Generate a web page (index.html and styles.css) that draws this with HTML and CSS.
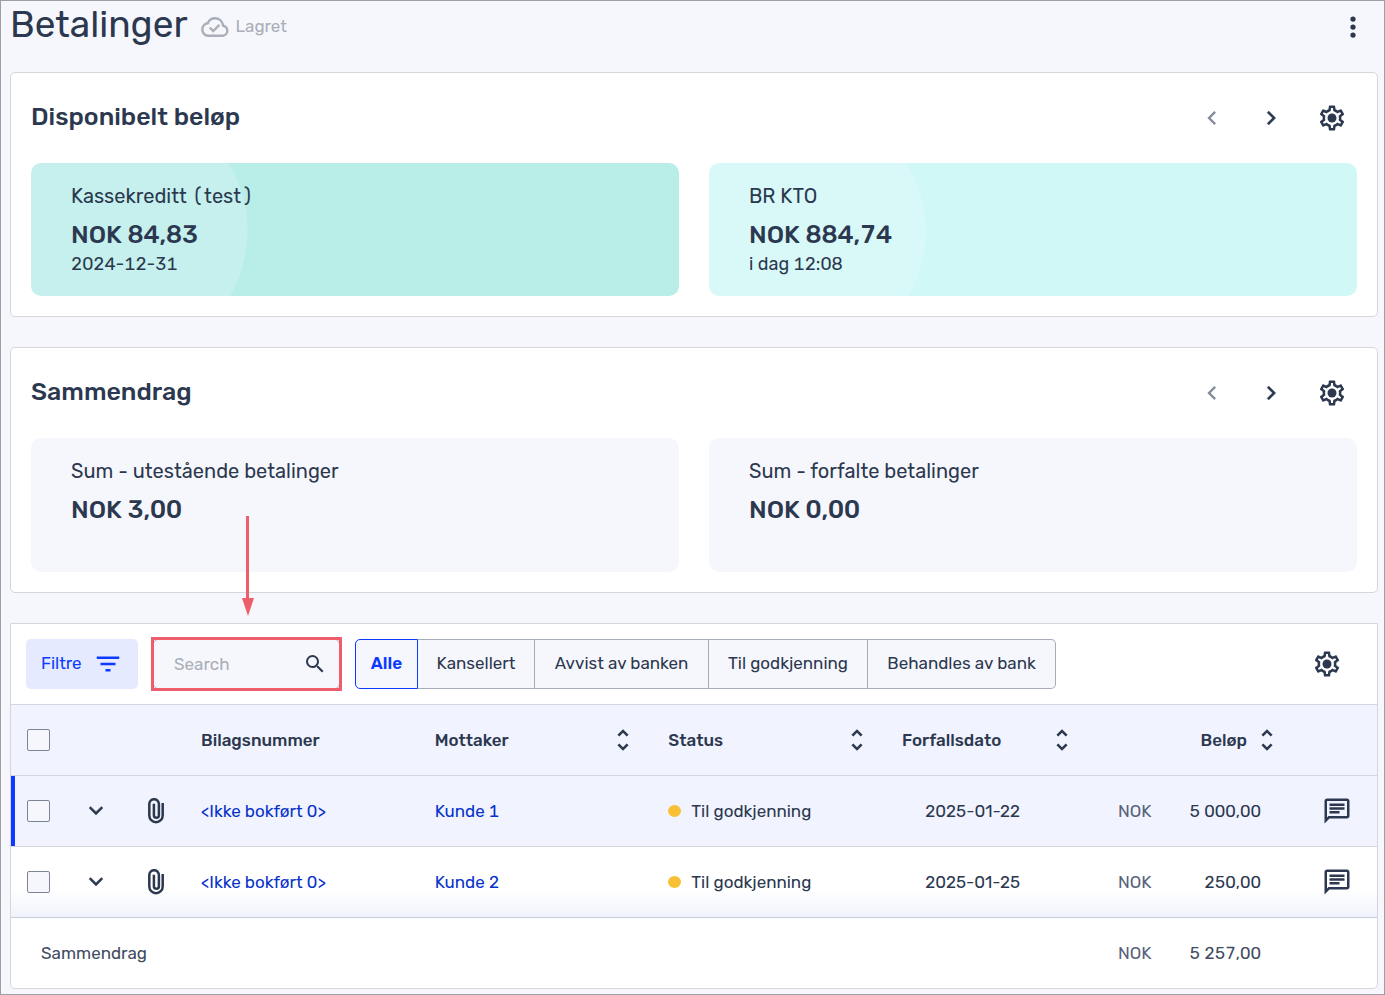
FILE: index.html
```html
<!DOCTYPE html>
<html lang="nb">
<head>
<meta charset="utf-8">
<title>Betalinger</title>
<link rel="stylesheet" href="styles.css">
</head>
<body>
<svg class="sprite" aria-hidden="true">
  <symbol id="gear" viewBox="0 0 24 24"><path d="M19.43 12.98c.04-.32.07-.64.07-.98 0-.34-.03-.66-.07-.98l2.11-1.65c.19-.15.24-.42.12-.64l-2-3.46c-.09-.16-.26-.25-.44-.25-.06 0-.12.01-.17.03l-2.49 1c-.52-.4-1.08-.73-1.69-.98l-.38-2.65C14.46 2.18 14.25 2 14 2h-4c-.25 0-.46.18-.49.42l-.38 2.65c-.61.25-1.17.59-1.69.98l-2.49-1c-.06-.02-.12-.03-.18-.03-.17 0-.34.09-.43.25l-2 3.46c-.13.22-.07.49.12.64l2.11 1.65c-.04.32-.07.65-.07.98 0 .33.03.66.07.98l-2.11 1.65c-.19.15-.24.42-.12.64l2 3.46c.09.16.26.25.44.25.06 0 .12-.01.17-.03l2.49-1c.52.4 1.08.73 1.69.98l.38 2.65c.03.24.24.42.49.42h4c.25 0 .46-.18.49-.42l.38-2.65c.61-.25 1.17-.59 1.69-.98l2.49 1c.06.02.12.03.18.03.17 0 .34-.09.43-.25l2-3.46c.12-.22.07-.49-.12-.64l-2.11-1.65zm-1.98-1.71c.04.31.05.52.05.73 0 .21-.02.43-.05.73l-.14 1.13.89.7 1.08.84-.7 1.21-1.27-.51-1.04-.42-.9.68c-.43.32-.84.56-1.25.73l-1.06.43-.16 1.13-.2 1.35h-1.4l-.19-1.35-.16-1.13-1.06-.43c-.43-.18-.83-.41-1.23-.71l-.91-.7-1.06.43-1.27.51-.7-1.21 1.08-.84.89-.7-.14-1.13c-.03-.31-.05-.54-.05-.74s.02-.43.05-.73l.14-1.13-.89-.7-1.08-.84.7-1.21 1.27.51 1.04.42.9-.68c.43-.32.84-.56 1.25-.73l1.06-.43.16-1.13.2-1.35h1.39l.19 1.35.16 1.13 1.06.43c.43.18.83.41 1.23.71l.91.7 1.06-.43 1.27-.51.7 1.21-1.07.85-.89.7.14 1.13z"/><circle cx="12" cy="12" r="3.6"/></symbol>
  <symbol id="left" viewBox="0 0 24 24"><path d="M15.41 7.41 14 6l-6 6 6 6 1.41-1.41L10.83 12z"/></symbol>
  <symbol id="right" viewBox="0 0 24 24"><path d="M7.800 16.59 9.210 18l6-6-6-6L7.800 7.410 12.380 12z" stroke="currentColor" stroke-width=".3"/></symbol>
  <symbol id="down" viewBox="0 0 24 24"><path d="M16.59 8.09 12 12.670 7.41 8.09 6 9.5l6 6 6-6z" stroke="currentColor" stroke-width=".3"/></symbol>
  <symbol id="sort" viewBox="0 0 24 24"><path d="M12 5.83 15.17 9l1.6-1.41L12 2.8 7.23 7.59 8.83 9zM12 18.17 8.83 15l-1.6 1.41L12 21.2l4.77-4.79L15.17 15z"/></symbol>
  <symbol id="clip" viewBox="0 0 16 26"><path d="M14.700 5v12.500a6.700 6.700 0 0 1-13.400 0V6a4.800 4.800 0 0 1 9.600 0v11.300a2.500 2.500 0 0 1-5 0V5.800" fill="none" stroke="currentColor" stroke-width="2.500"/></symbol>
  <symbol id="note" viewBox="0 0 24 24"><path d="M4 4h16v12H5.17L4 17.17V4m0-2c-1.1 0-1.99.9-1.99 2L2 22l4-4h14c1.1 0 2-.9 2-2V4c0-1.1-.9-2-2-2H4zm2 10h8v2H6v-2zm0-3h12v2H6V9zm0-3h12v2H6V6z"/></symbol>
</svg>
<main class="page">
  <header class="page-head">
    <h1 class="page-title">Betalinger</h1>
    <span class="saved">
      <svg class="cloud" viewBox="0 0 28 20" aria-hidden="true"><g fill="none" stroke="currentColor" stroke-width="2.400"><path d="M7 18.700h14.700a5 5 0 0 0 .5-9.900C21.500 4.300 18.200 1.300 14 1.300c-3.300 0-6 1.900-7.200 4.900C3.600 6.500 1.300 9.100 1.300 12.500 1.300 16 3.800 18.700 7 18.700z"/><path d="m8.700 10.500 3.500 3.500 6.200-6.200"/></g></svg>
      <span class="saved-text">Lagret</span>
    </span>
    <button class="icon-btn more" aria-label="Flere valg"><svg class="icon" viewBox="0 0 24 24"><circle cx="12" cy="5.600" r="2.100"/><circle cx="12" cy="12" r="2.100"/><circle cx="12" cy="18.400" r="2.100"/></svg></button>
  </header>

  <section class="panel">
    <div class="panel-head">
      <h2 class="panel-title">Disponibelt beløp</h2>
      <button class="icon-btn" aria-label="Forrige" disabled><svg class="icon small"><use href="#left"/></svg></button>
      <button class="icon-btn" aria-label="Neste"><svg class="icon small"><use href="#right"/></svg></button>
      <button class="icon-btn" aria-label="Innstillinger"><svg class="icon"><use href="#gear"/></svg></button>
    </div>
    <div class="cards">
      <article class="card teal">
        <h3 class="card-name">Kassekreditt (test)</h3>
        <p class="card-sum">NOK 84,83</p>
        <p class="card-date">2024-12-31</p>
      </article>
      <article class="card aqua">
        <h3 class="card-name">BR KTO</h3>
        <p class="card-sum">NOK 884,74</p>
        <p class="card-date">i dag 12:08</p>
      </article>
    </div>
  </section>

  <section class="panel">
    <div class="panel-head">
      <h2 class="panel-title">Sammendrag</h2>
      <button class="icon-btn" aria-label="Forrige" disabled><svg class="icon small"><use href="#left"/></svg></button>
      <button class="icon-btn" aria-label="Neste"><svg class="icon small"><use href="#right"/></svg></button>
      <button class="icon-btn" aria-label="Innstillinger"><svg class="icon"><use href="#gear"/></svg></button>
    </div>
    <div class="cards">
      <article class="card plain">
        <h3 class="card-name">Sum - utestående betalinger</h3>
        <p class="card-sum">NOK 3,00</p>
      </article>
      <article class="card plain">
        <h3 class="card-name">Sum - forfalte betalinger</h3>
        <p class="card-sum">NOK 0,00</p>
      </article>
    </div>
  </section>

  <section class="list">
    <div class="toolbar">
      <button class="filter"><span class="label">Filtre</span><svg class="icon" viewBox="0 0 24 24"><path d="M3 6h18v2H3zM6 11h12v2H6zM10 16h4v2h-4z"/></svg></button>
      <div class="search">
        <input class="search-input" type="search" placeholder="Search" aria-label="Search">
        <button class="search-btn" aria-label="Søk"><svg class="icon tiny" viewBox="0 0 24 24"><path d="M15.500 14h-.79l-.28-.27A6.470 6.470 0 0 0 16 9.500 6.500 6.500 0 1 0 9.500 16c1.610 0 3.090-.59 4.230-1.570l.27.28v.79l5 4.990L20.490 19zm-6 0C7.010 14 5 11.990 5 9.500S7.010 5 9.500 5 14 7.010 14 9.500 11.990 14 9.500 14z"/></svg></button>
        <svg class="arrow" viewBox="0 0 12 100" aria-hidden="true"><path d="M4 0h3v82h5L6 100 0 82h4z"/></svg>
      </div>
      <div class="tabs">
        <button class="tab active">Alle</button>
        <button class="tab">Kansellert</button>
        <button class="tab">Avvist av banken</button>
        <button class="tab">Til godkjenning</button>
        <button class="tab">Behandles av bank</button>
      </div>
      <button class="icon-btn push" aria-label="Innstillinger"><svg class="icon"><use href="#gear"/></svg></button>
    </div>
    <table class="table">
      <colgroup><col class="c-check"><col class="c-expand"><col class="c-clip"><col><col><col><col class="c-date"><col class="c-date"><col class="c-note"></colgroup>
      <thead>
        <tr>
          <th><input class="check" type="checkbox" aria-label="Velg alle"></th>
          <th></th>
          <th></th>
          <th>Bilagsnummer</th>
          <th><div class="split">Mottaker<button class="sort" aria-label="Sorter mottaker"><svg class="icon small"><use href="#sort"/></svg></button></div></th>
          <th><div class="split">Status<button class="sort" aria-label="Sorter status"><svg class="icon small"><use href="#sort"/></svg></button></div></th>
          <th><div class="split">Forfallsdato<button class="sort" aria-label="Sorter forfallsdato"><svg class="icon small"><use href="#sort"/></svg></button></div></th>
          <th><div class="split end">Beløp<button class="sort" aria-label="Sorter beløp"><svg class="icon small"><use href="#sort"/></svg></button></div></th>
          <th></th>
        </tr>
      </thead>
      <tbody>
        <tr class="selected">
          <td><input class="check" type="checkbox" aria-label="Velg Kunde 1"></td>
          <td class="mid"><button class="cell-btn" aria-label="Vis detaljer"><svg class="icon small"><use href="#down"/></svg></button></td>
          <td class="mid"><button class="cell-btn" aria-label="Vedlegg"><svg class="clip"><use href="#clip"/></svg></button></td>
          <td><a class="link" href="#">&lt;Ikke bokført 0&gt;</a></td>
          <td><a class="link" href="#">Kunde 1</a></td>
          <td><span class="status">Til godkjenning</span></td>
          <td class="date">2025-01-22</td>
          <td class="money"><div class="amount"><span class="cur">NOK</span>5 000,00</div></td>
          <td class="mid"><button class="cell-btn" aria-label="Kommentar"><svg class="icon"><use href="#note"/></svg></button></td>
        </tr>
        <tr class="last">
          <td><input class="check" type="checkbox" aria-label="Velg Kunde 2"></td>
          <td class="mid"><button class="cell-btn" aria-label="Vis detaljer"><svg class="icon small"><use href="#down"/></svg></button></td>
          <td class="mid"><button class="cell-btn" aria-label="Vedlegg"><svg class="clip"><use href="#clip"/></svg></button></td>
          <td><a class="link" href="#">&lt;Ikke bokført 0&gt;</a></td>
          <td><a class="link" href="#">Kunde 2</a></td>
          <td><span class="status">Til godkjenning</span></td>
          <td class="date">2025-01-25</td>
          <td class="money"><div class="amount"><span class="cur">NOK</span>250,00</div></td>
          <td class="mid"><button class="cell-btn" aria-label="Kommentar"><svg class="icon"><use href="#note"/></svg></button></td>
        </tr>
      </tbody>
      <tfoot>
        <tr>
          <td class="foot-label" colspan="7">Sammendrag</td>
          <td class="money"><div class="amount"><span class="cur">NOK</span>5 257,00</div></td>
          <td></td>
        </tr>
      </tfoot>
    </table>
  </section>
</main>
</body>
</html>
```
FILE: styles.css
```css
* { box-sizing: border-box; }

body {
  margin: 0;
  background: #f6f7fc;
  color: #2b384f;
  font-family: Rubik, Inter, sans-serif;
  font-size: 17px;
  font-variant-numeric: tabular-nums;
  line-height: 24px;
}

h1, h2, h3, p { margin: 0; font-weight: 400; }

button {
  margin: 0;
  padding: 0;
  border: 0;
  background: none;
  color: inherit;
  font: inherit;
  cursor: pointer;
}

.sprite { position: absolute; width: 0; height: 0; }

.icon { display: block; width: 30px; height: 30px; fill: currentColor; }
.icon.small { width: 28px; height: 28px; }
.icon.tiny { width: 24px; height: 24px; }

.page {
  min-height: 100vh;
  padding: 0 6px 5px 9px;
  border: 1px solid #9d9fa5;
}

.page-head {
  display: flex;
  align-items: center;
  height: 52px;
  margin-bottom: 19px;
}

.page-title { font-size: 37px; line-height: 44px; padding-bottom: 6px; }

.saved {
  display: flex;
  align-items: center;
  gap: 6px;
  margin-left: 14px;
  color: #a9aeb8;
}

.saved-text, .label { padding-bottom: 2px; }
.cloud { width: 28px; height: 20px; }

.icon-btn {
  display: grid;
  place-items: center;
  width: 50px;
  height: 50px;
}

.icon-btn:disabled { color: #858c9a; }
.more { margin-left: auto; }

.panel {
  margin-bottom: 30px;
  padding: 20px;
  border: 1px solid #d4d6dc;
  border-radius: 5px;
  background: #fff;
}

.panel-head {
  display: flex;
  gap: 10px;
  align-items: center;
  margin-bottom: 20px;
}

.panel-title {
  flex: 1;
  padding-bottom: 2px;
  font-size: 25px;
  font-weight: 500;
  line-height: 32px;
}

.cards {
  display: grid;
  grid-template-columns: 1fr 1fr;
  gap: 30px;
}

.card {
  min-height: 133px;
  padding: 18px 40px;
  border-radius: 10px;
}

.card.teal { background: radial-gradient(circle at 86px 68px, #c5f0ed 130px, #b8ede8 131px); }
.card.aqua { background: radial-gradient(circle at 86px 68px, #d8f9f8 130px, #d0f8f7 131px); }
.card.plain { min-height: 134px; background: #f6f7fc; }

.card-name { margin-bottom: 7px; font-size: 20px; line-height: 30px; }
.card-sum { font-size: 25px; font-weight: 500; line-height: 34px; }
.card-date { font-size: 18px; }

.list {
  border: 1px solid #d4d6dc;
  border-radius: 0 0 5px 5px;
  background: #fff;
}

.toolbar {
  display: flex;
  gap: 15px;
  padding: 15px;
  border-bottom: 1px solid #d4d6dc;
}

.filter {
  display: flex;
  align-items: center;
  justify-content: space-between;
  width: 112px;
  height: 50px;
  padding: 0 15px;
  border-radius: 5px;
  background: #e5eaff;
  color: #0c3bff;
}

.search {
  position: relative;
  display: flex;
  align-items: center;
  width: 187px;
  height: 50px;
  padding-right: 12px;
  border: 1px solid #a6adb8;
  border-radius: 5px;
  background: #f6f7fc;
}

/* Callout frame around the search field */
.search::after {
  content: "";
  position: absolute;
  inset: -3px;
  border: 3px solid #ee5e6a;
  pointer-events: none;
}

.search-input {
  flex: 1;
  min-width: 0;
  height: 48px;
  padding: 0 0 0 20px;
  border: 0;
  outline: 0;
  background: none;
  color: inherit;
  font: inherit;
}

.search-input::placeholder { color: #a9aeb8; opacity: 1; }

.arrow {
  position: absolute;
  left: 88px;
  bottom: 72px;
  width: 12px;
  height: 100px;
  fill: #ee5e6a;
}

.tabs {
  display: grid;
  grid-template-columns: 63px 117px 174px 159px 188px;
  height: 50px;
}

.tab {
  padding-bottom: 2px;
  border: 1px solid #a6adb8;
  border-left-width: 0;
  background: #f6f7fc;
  white-space: nowrap;
}

.tab.active {
  border: 1px solid #0c3bff;
  border-radius: 5px 0 0 5px;
  color: #0c3bff;
  font-weight: 600;
}

.tab:last-child { border-radius: 0 5px 5px 0; }

.push { margin-left: auto; margin-right: 10px; }

.table {
  width: 100%;
  border-spacing: 0;
  table-layout: fixed;
}

.c-check { width: 55px; }
.c-expand { width: 60px; }
.c-clip { width: 59px; }
.c-date { width: 205px; }
.c-note { width: 81px; }

.table th, .table td {
  height: 71px;
  padding: 0 16px;
  border-bottom: 1px solid #d4d6dc;
  text-align: left;
  white-space: nowrap;
}

.table th { background: #f1f3fe; font-weight: 500; }
.table .selected td { background: #f1f3fe; }
.table .selected td:first-child { box-shadow: inset 4px 0 #0c3bff; }
.table .last td {
  border-bottom-color: #c6ccdc;
  background: linear-gradient(#fff 60%, #f0f3fc);
}
.table tfoot td { border-bottom: 0; height: 70px; color: #414c61; }
.table .foot-label { padding-left: 30px; }
.table .mid { padding: 0; }

.check {
  appearance: none;
  display: block;
  width: 23px;
  height: 22px;
  margin: 0;
  border: 1px solid #7d8595;
  border-radius: 2px;
  background: #f6f7fc;
}

.cell-btn { display: grid; place-items: center; width: 100%; }
.clip { width: 16px; height: 26px; }

.split { display: flex; align-items: center; justify-content: space-between; }
.split.end { justify-content: flex-end; gap: 6px; }
.sort { margin-right: -1px; }

.link { color: #0833c9; text-decoration: none; }

.status { display: flex; align-items: center; gap: 10px; }
.status::before {
  content: "";
  width: 13px;
  height: 12px;
  border-radius: 50%;
  background: #f8c135;
}

.table .date {
  padding-right: 71px;
  font-variant-numeric: normal;
  text-align: right;
}
.table .money { padding: 0 35px 0 27px; }
.amount { display: flex; justify-content: space-between; }
.cur { color: #58627a; }
```
